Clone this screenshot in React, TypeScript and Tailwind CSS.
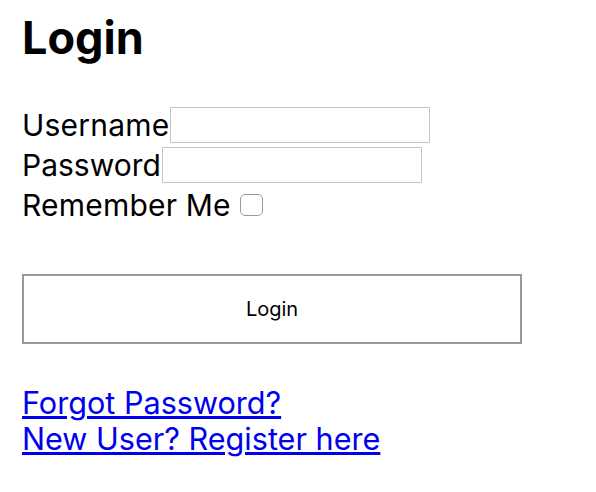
import React, { useState } from 'react';

export default function App() {
  const [username, setUsername] = useState('');
  const [password, setPassword] = useState('');
  const [remember, setRemember] = useState(false);

  return (
    <main className="min-h-screen bg-white px-[22px] pt-[8px] text-black font-['Inter',sans-serif]">
      <h1 className="text-[45px] font-bold leading-[60px]">Login</h1>

      <form className="mt-[37px] flex flex-col" onSubmit={(e) => e.preventDefault()}>
        {/* Username */}
        <div className="flex h-[40px] items-center">
          <label className="text-[30px] leading-[40px] tracking-[0.2px]">Username</label>
          <input
            type="text"
            value={username}
            onChange={(e) => setUsername(e.target.value)}
            className="ml-px h-[36px] w-[260px] border border-[#c4c4c4] bg-white outline-none"
          />
        </div>

        {/* Password */}
        <div className="flex h-[40px] items-center">
          <label className="text-[30px] leading-[40px]">Password</label>
          <input
            type="password"
            value={password}
            onChange={(e) => setPassword(e.target.value)}
            className="ml-px h-[36px] w-[260px] border border-[#c4c4c4] bg-white outline-none"
          />
        </div>

        {/* Remember me */}
        <div className="flex h-[40px] items-center">
          <label className="text-[30px] leading-[40px] tracking-[0.2px]">Remember Me</label>
          <input
            type="checkbox"
            checked={remember}
            onChange={(e) => setRemember(e.target.checked)}
            className="ml-[9px] h-[22px] w-[23px] appearance-none rounded-[5px] border border-[#9a9a9a] bg-white"
          />
        </div>

        <button
          type="submit"
          className="mt-[49px] h-[70px] w-[500px] border-2 border-[#9a9a9a] bg-white text-[20px]"
        >
          Login
        </button>
      </form>

      <div className="mt-[41px] flex flex-col text-[30.6px] leading-[36px] text-[#0000ee]">
        <a href="#" className="underline">Forgot Password?</a>
        <a href="#" className="underline">New User? Register here</a>
      </div>
    </main>
  );
}
